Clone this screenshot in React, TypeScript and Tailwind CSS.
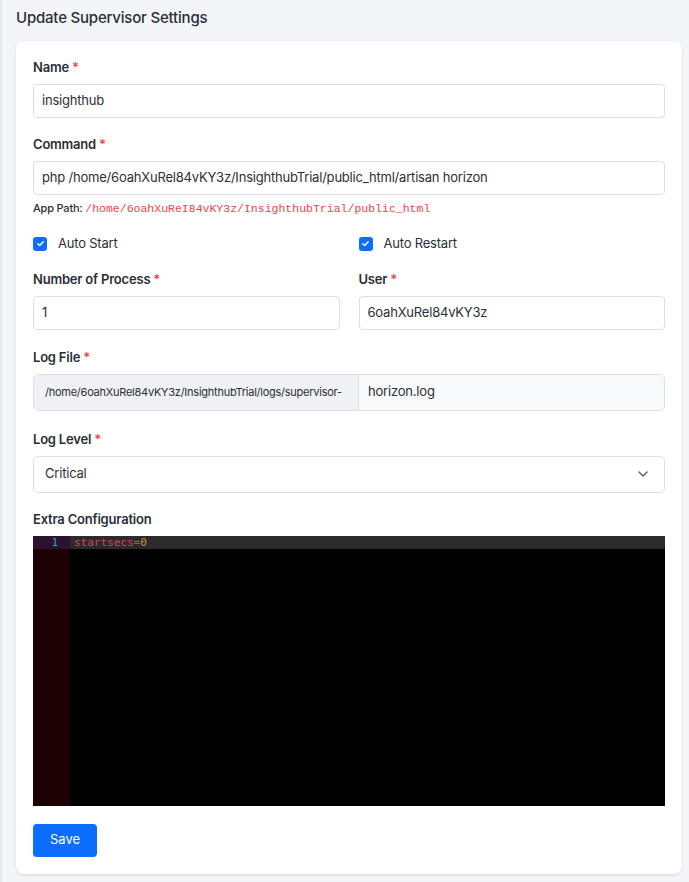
import React from "react";

const Req = () => <span className="text-[#ef4444] ml-[3px]">*</span>;

const Label = ({ children, req = true }: { children: React.ReactNode; req?: boolean }) => (
  <div className="text-[13px] font-semibold text-[#2b2f36] leading-[16px] mb-[9px] tracking-[-0.2px]">
    {children}
    {req && <Req />}
  </div>
);

const Check = ({ label }: { label: string }) => (
  <div className="flex items-center gap-[11px]">
    <div className="w-[14px] h-[14px] rounded-[3px] bg-[#0d6efd] flex items-center justify-center">
      <svg width="9" height="9" viewBox="0 0 10 10" fill="none">
        <path d="M2 5.3 L4.1 7.3 L8 3" stroke="white" strokeWidth="1.6" strokeLinecap="round" strokeLinejoin="round" />
      </svg>
    </div>
    <span className="text-[13px] text-[#2b2f36] tracking-[-0.2px]">{label}</span>
  </div>
);

const inputCls =
  "h-[34px] w-full border border-[#dcdfe4] rounded-[4px] bg-white px-[8px] flex items-center text-[13px] text-[#2b2f36] tracking-[-0.2px]";

export default function App() {
  return (
    <div
      className="min-h-[882px] bg-[#f4f5f9] pl-[16px] pr-[7px] pt-[8px] pb-[9px] border-l-[2px] border-[#e6e8ee]"
      style={{ fontFamily: "Inter, 'Noto Sans', sans-serif" }}
    >
      <div className="text-[15px] font-medium text-[#2b2f36] leading-[20px] ml-[-2px] tracking-[-0.2px]">Update Supervisor Settings</div>
      <div className="mt-[13px] bg-white rounded-[8px] shadow-[0_1px_3px_rgba(0,0,0,0.12)] px-[17px] pt-[18px] pb-[17px] w-[666px] ml-[-2px]">
        <Label>Name</Label>
        <div className={inputCls}>insighthub</div>

        <div className="mt-[18px]">
          <Label>Command</Label>
          <div className={inputCls}>php /home/6oahXuRel84vKY3z/InsighthubTrial/public_html/artisan horizon</div>
          <div className="mt-[6px] text-[11px] leading-[14px] text-[#2b2f36] font-medium tracking-[-0.2px]">
            App Path:{" "}
            <span className="text-[#ef4444] font-normal tracking-normal text-[11.5px]" style={{ fontFamily: "'Liberation Mono', monospace" }}>
              /home/6oahXuReI84vKY3z/InsighthubTrial/public_html
            </span>
          </div>
        </div>

        <div className="grid grid-cols-2 gap-x-[19px] mt-[18px]">
          <Check label="Auto Start" />
          <Check label="Auto Restart" />
        </div>

        <div className="grid grid-cols-2 gap-x-[19px] mt-[17px]">
          <div>
            <Label>Number of Process</Label>
            <div className={inputCls}>1</div>
          </div>
          <div>
            <Label>User</Label>
            <div className={inputCls}>6oahXuRel84vKY3z</div>
          </div>
        </div>

        <div className="mt-[19px]">
          <Label>Log File</Label>
          <div className="flex h-[37px] border border-[#dcdfe4] rounded-[5px] overflow-hidden">
            <div className="w-[325px] bg-[#eff1f4] border-r border-[#dcdfe4] flex items-center pl-[11px] text-[11px] text-[#2b2f36] whitespace-nowrap overflow-hidden tracking-[-0.25px]">
              /home/6oahXuRel84vKY3z/InsighthubTrial/logs/supervisor-
            </div>
            <div className="flex-1 bg-[#f8f9fa] flex items-center pl-[9px] text-[13px] text-[#2b2f36] tracking-[-0.2px]">horizon.log</div>
          </div>
        </div>

        <div className="mt-[20px]">
          <Label>Log Level</Label>
          <div className="h-[37px] border border-[#dcdfe4] rounded-[5px] flex items-center justify-between pl-[11px] pr-[16px] text-[13px] text-[#2b2f36] tracking-[-0.2px]">
            <span>Critical</span>
            <svg width="10" height="6" viewBox="0 0 10 6" fill="none">
              <path d="M1 1 L5 5 L9 1" stroke="#555a63" strokeWidth="1.4" strokeLinecap="round" strokeLinejoin="round" />
            </svg>
          </div>
        </div>

        <div className="mt-[18px]">
          <Label req={false}>Extra Configuration</Label>
          <div
            className="h-[270px] bg-black flex text-[11px] leading-[13px]"
            style={{ fontFamily: "'DejaVu Sans Mono', monospace" }}
          >
            <div className="w-[37px] bg-[#1c0004] flex flex-col">
              <div className="h-[13px] bg-[#2a1230] text-[#4d8fcf] text-right pr-[12px]">1</div>
            </div>
            <div className="flex-1 flex flex-col">
              <div className="h-[13px] bg-[#2b2b2b] pl-[4px] text-[#c44a58]">
                startsecs=<span className="text-[#d48a3e]">0</span>
              </div>
            </div>
          </div>
        </div>

        <button className="mt-[18px] h-[33px] w-[64px] bg-[#0d6efd] text-white text-[13px] rounded-[4px]">Save</button>
      </div>
    </div>
  );
}
